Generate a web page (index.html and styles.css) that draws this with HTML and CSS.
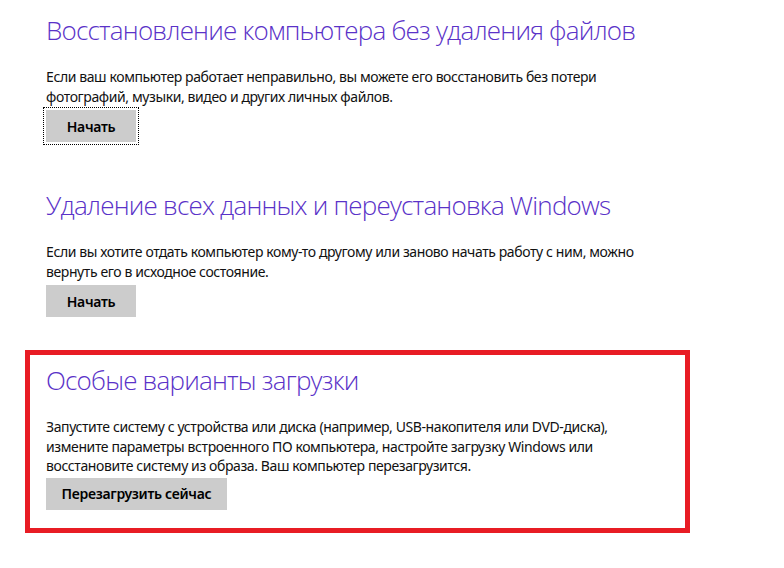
FILE: index.html
```html
<!DOCTYPE html>
<html lang="ru">
<head>
<meta charset="utf-8">
<link rel="stylesheet" href="styles.css">
</head>
<body>
<main class="page">
  <section class="section s1">
    <h2 class="title">Восстановление компьютера без удаления файлов</h2>
    <p class="desc">Если ваш компьютер работает неправильно, вы можете его восстановить без потери<br>фотографий, музыки, видео и других личных файлов.</p>
    <button class="btn focused">Начать</button>
  </section>
  <section class="section s2">
    <h2 class="title">Удаление всех данных и переустановка Windows</h2>
    <p class="desc">Если вы хотите отдать компьютер кому-то другому или заново начать работу с ним, можно<br>вернуть его в исходное состояние.</p>
    <button class="btn">Начать</button>
  </section>
  <section class="section boxed">
    <h2 class="title">Особые варианты загрузки</h2>
    <p class="desc tight">Запустите систему с устройства или диска (например, USB-накопителя или DVD-диска),<br>измените параметры встроенного ПО компьютера, настройте загрузку Windows или<br>восстановите систему из образа. Ваш компьютер перезагрузится.</p>
    <button class="btn wide">Перезагрузить сейчас</button>
  </section>
</main>
</body>
</html>
```
FILE: styles.css
```css
html, body {
  margin: 0;
  padding: 0;
  background: #ffffff;
}
body {
  width: 784px;
  height: 568px;
  overflow: hidden;
  font-family: "Noto Sans", "Open Sans", sans-serif;
  color: #000;
}
.page {
  display: flex;
  flex-direction: column;
  padding-top: 13px;
}
.section {
  margin-left: 46px;
  display: flex;
  flex-direction: column;
  align-items: flex-start;
}
.s2 {
  margin-top: 46px;
}
.boxed {
  margin-left: 25px;
  margin-top: 33px;
  width: 623px;
  border: 5px solid #e81c24;
  padding: 8px 16px 18px 16px;
}
.title {
  margin: 0;
  font-family: "Open Sans", "Noto Sans", sans-serif;
  font-size: 26px;
  line-height: 34px;
  font-weight: 300;
  color: #5a32c8;
  letter-spacing: -0.8px;
}
.desc {
  margin: 20px 0 3px 0;
  font-size: 14px;
  line-height: 20px;
  color: #111;
  letter-spacing: -0.4px;
}
.desc.tight {
  line-height: 19.5px;
  margin-bottom: 2px;
}
.btn {
  border: none;
  background: #cccccc;
  height: 32px;
  width: 90px;
  padding: 0;
  font-family: inherit;
  font-size: 14px;
  font-weight: 600;
  color: #000;
  letter-spacing: -0.3px;
}
.btn.wide {
  width: 181px;
}
.btn.focused {
  outline: 1px dotted #000;
  outline-offset: 2px;
}
```
